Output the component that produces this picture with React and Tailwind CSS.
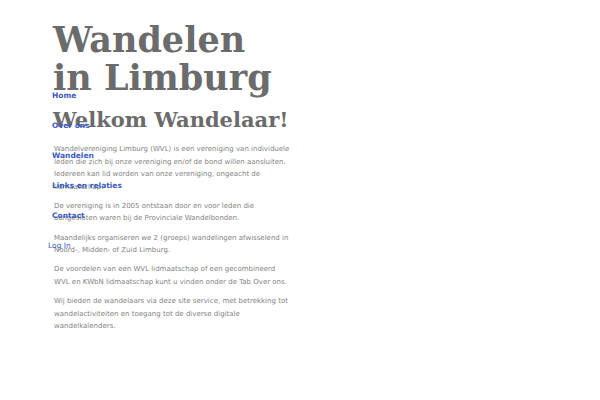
export default function App() {
  const links = ["Home", "Over ons", "Wandelen", "Links en relaties", "Contact"];
  return (
    <div className="relative min-h-[400px] w-[600px] bg-white" style={{ fontFamily: "'DejaVu Sans', sans-serif" }}>
      <div className="pl-[53px] pt-[21px]">
        <h1 className="text-[35px] leading-[38px] font-bold text-[#6b6b6b] whitespace-nowrap" style={{ fontFamily: "'DejaVu Serif', serif" }}>
          Wandelen
          <br />
          in Limburg
        </h1>
        <h2 className="mt-[8px] text-[21px] leading-[30px] font-bold text-[#6b6b6b] whitespace-nowrap" style={{ fontFamily: "'DejaVu Serif', serif" }}>
          Welkom Wandelaar!
        </h2>
        <div className="mt-[8px] pl-[1px] w-[238px] text-[7px] leading-[12.6px] text-[#838383]">
          <p>
            Wandelvereniging Limburg (WVL) is een vereniging van individuele leden die zich bij onze vereniging en/of de bond willen aansluiten. Iedereen kan lid worden van onze vereniging, ongeacht de lidmaatschap.
          </p>
          <p className="mt-[6.5px]">
            De vereniging is in 2005 ontstaan door en voor leden die aangesloten waren bij de Provinciale Wandelbonden.
          </p>
          <p className="mt-[6.5px]">
            Maandelijks organiseren we 2 (groeps) wandelingen afwisselend in Noord-, Midden- of Zuid Limburg.
          </p>
          <p className="mt-[6.5px]">
            De voordelen van een WVL lidmaatschap of een gecombineerd WVL en KWbN lidmaatschap kunt u vinden onder de Tab Over ons.
          </p>
          <p className="mt-[6.5px]">
            Wij bieden de wandelaars via deze site service, met betrekking tot wandelactiviteiten en toegang tot de diverse digitale wandelkalenders.
          </p>
        </div>
      </div>

      {/* menu ligt over de inhoud heen */}
      <nav className="absolute left-[52px] top-[90px] flex flex-col">
        {links.map((l) => (
          <a key={l} href="#" className="h-[30px] text-[7.5px] leading-[12px] font-bold text-[#3a5bbf]">
            {l}
          </a>
        ))}
        <a href="#" className="-ml-[4px] h-[30px] text-[7.5px] leading-[12px] text-[#3a5bbf]">
          Log In
        </a>
      </nav>
    </div>
  );
}
